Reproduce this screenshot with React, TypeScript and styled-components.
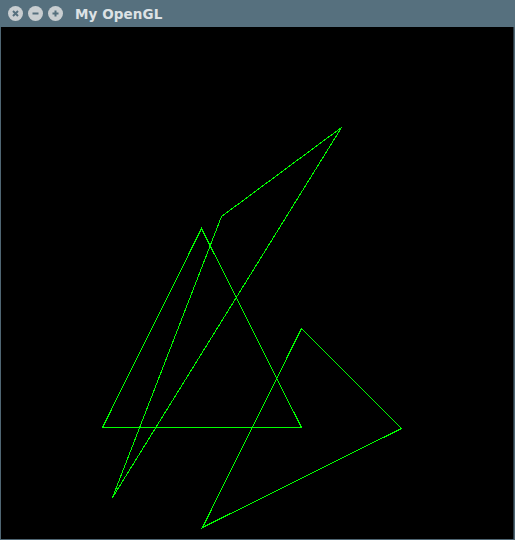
import React from "react";
import styled, { createGlobalStyle } from "styled-components";

const Global = createGlobalStyle`
  html, body { margin: 0; padding: 0; background: #000; }
  body { width: 515px; height: 540px; overflow: hidden; }
`;

const Window = styled.div`
  width: 515px;
  height: 540px;
  display: flex;
  flex-direction: column;
  box-sizing: border-box;
  background: #4f6673;
  padding: 0 1px 1px 1px;
`;

const TitleBar = styled.div`
  height: 27px;
  flex: none;
  display: flex;
  align-items: center;
  padding-left: 8px;
  margin: 0 -1px;
  background: #56707e;
  font-family: "DejaVu Sans", "Open Sans", sans-serif;
`;

const Buttons = styled.div`
  display: flex;
  gap: 5px;
  margin-right: 12px;
`;

const CircleBtn = styled.div`
  width: 15px;
  height: 15px;
  border-radius: 50%;
  background: #c9ced1;
  display: flex;
  align-items: center;
  justify-content: center;
`;

const Title = styled.div`
  color: #dde2e5;
  font-weight: bold;
  font-size: 13.5px;
  letter-spacing: 0.1px;
`;

const Canvas = styled.div`
  flex: 1;
  background: #000;
  border-right: 1px solid #2b3a42;
  display: flex;
`;

const Drawing = styled.svg`
  display: block;
  width: 100%;
  height: 100%;
`;

const Glyph: React.FC<{ kind: "close" | "min" | "max" }> = ({ kind }) => (
  <svg width="15" height="15" viewBox="0 0 15 15">
    {kind === "close" && (
      <path d="M5 5 L10 10 M10 5 L5 10" stroke="#56707e" strokeWidth="2" />
    )}
    {kind === "min" && <path d="M4.5 7.5 H10.5" stroke="#56707e" strokeWidth="2" />}
    {kind === "max" && <path d="M4.5 7.5 H10.5 M7.5 4.5 V10.5" stroke="#56707e" strokeWidth="2" />}
  </svg>
);

const ox = 1;
const oy = 27;
const pt = (x: number, y: number) => `${x - ox + 0.5},${y - oy + 0.5}`;

const shapes: [number, number][][] = [
  [[201, 228], [102, 427], [301, 427]],
  [[341, 127], [221, 216], [112, 497]],
  [[301, 328], [401, 428], [202, 527]],
];

export default function App() {
  return (
    <>
      <Global />
      <Window>
        <TitleBar>
          <Buttons>
            <CircleBtn><Glyph kind="close" /></CircleBtn>
            <CircleBtn><Glyph kind="min" /></CircleBtn>
            <CircleBtn><Glyph kind="max" /></CircleBtn>
          </Buttons>
          <Title>My OpenGL</Title>
        </TitleBar>
        <Canvas>
          <Drawing>
            {shapes.map((s, i) => (
              <polygon
                key={i}
                points={s.map(([x, y]) => pt(x, y)).join(" ")}
                fill="none"
                stroke="#00ff00"
                strokeWidth="1"
                shapeRendering="crispEdges"
              />
            ))}
          </Drawing>
        </Canvas>
      </Window>
    </>
  );
}
